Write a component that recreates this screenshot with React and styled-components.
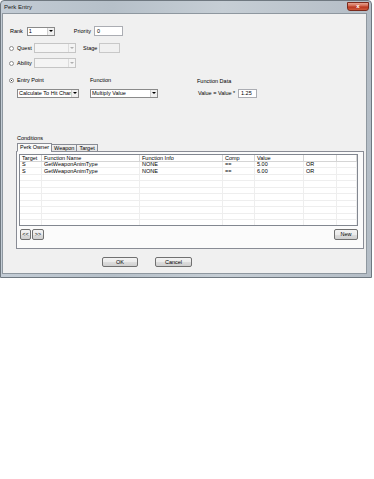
import React from 'react'
import styled, { createGlobalStyle } from 'styled-components'

const Global = createGlobalStyle`
  html, body { margin: 0; padding: 0; background: #fff; }
  * { box-sizing: border-box; }
`

const Window = styled.div`
  width: 372px;
  height: 278px;
  overflow: hidden;
  display: flex;
  flex-direction: column;
  padding: 0 4px 3px 1px;
  background: linear-gradient(90deg, #c3ccd5 0%, #b6c0c9 30%, #c6ced5 60%, #b4bdc6 100%);
  border: 1px solid #6f7880;
  border-radius: 4px 4px 0 0;
  font-family: "Liberation Sans", Arial, sans-serif;
  font-size: 5.5px;
  line-height: 1.1;
  color: #000;
`

const TitleBar = styled.div`
  height: 12px;
  flex: none;
  display: flex;
  align-items: center;
  justify-content: space-between;
  padding-left: 2px;
  font-size: 6px;
  color: #1a1a1a;
`

const CloseBtn = styled.div`
  width: 22px;
  height: 9px;
  margin-top: -2px;
  margin-right: -2px;
  border-radius: 0 0 3px 3px;
  border: 1px solid #7a2a1c;
  background: linear-gradient(#e6a391 0%, #d0644b 45%, #b8361e 55%, #cf5a3c 100%);
  color: #fff;
  font-size: 6px;
  font-weight: bold;
  display: flex;
  align-items: center;
  justify-content: center;
`

const Client = styled.div`
  flex: 1;
  min-height: 0;
  overflow: hidden;
  background: #f0f0f0;
  border: 1px solid #8e979f;
  padding: 11px 0 0 0;
  display: flex;
  flex-direction: column;
`

const Row = styled.div`
  display: flex;
  flex: none;
  align-items: center;
  height: ${p => p.h || 10}px;
  margin-top: ${p => p.mt || 0}px;
`

const Label = styled.span`
  display: inline-block;
  width: ${p => (p.w ? p.w + 'px' : 'auto')};
  margin-left: ${p => p.ml || 0}px;
  white-space: nowrap;
  color: #000;
`

const Radio = styled.span`
  width: 5px;
  height: 5px;
  border-radius: 50%;
  border: 1px solid #8d8d8d;
  background: ${p => (p.on ? 'radial-gradient(circle, #2a2a2a 35%, #fff 45%)' : '#fff')};
  margin-left: ${p => p.ml || 0}px;
  margin-right: 3px;
  flex: none;
`

const Combo = styled.div`
  width: ${p => p.w}px;
  height: ${p => p.h || 9}px;
  margin-left: ${p => p.ml || 0}px;
  border: 1px solid ${p => (p.disabled ? '#c5c5c5' : '#8a8a8a')};
  background: ${p => (p.disabled ? '#f4f4f4' : '#fff')};
  display: flex;
  align-items: center;
  padding-left: 1px;
  overflow: hidden;
  white-space: nowrap;
  flex: none;
`

const ComboText = styled.span`
  flex: 1;
  overflow: hidden;
`

const Arrow = styled.span`
  width: 7px;
  height: 100%;
  border-left: 1px solid ${p => (p.disabled ? '#dcdcdc' : '#d0d0d0')};
  background: ${p => (p.disabled ? '#f4f4f4' : '#f0f0f0')};
  display: flex;
  align-items: center;
  justify-content: center;
  flex: none;
  &::after {
    content: '';
    border-left: 2px solid transparent;
    border-right: 2px solid transparent;
    border-top: 2px solid ${p => (p.disabled ? '#b0b0b0' : '#000')};
  }
`

const Input = styled.div`
  width: ${p => p.w}px;
  height: ${p => p.h || 10}px;
  margin-left: ${p => p.ml || 0}px;
  border: 1px solid ${p => (p.disabled ? '#c8c8c8' : '#abadb3')};
  background: ${p => (p.disabled ? '#f0f0f0' : '#fff')};
  padding-left: 2px;
  display: flex;
  align-items: center;
  flex: none;
`

const Tabs = styled.div`
  display: flex;
  flex: none;
  margin: 1px 0 0 14px;
  height: 9px;
  align-items: flex-end;
  position: relative;
  z-index: 1;
`

const Tab = styled.div`
  height: ${p => (p.active ? 9 : 8)}px;
  padding: 0 2px;
  border: 1px solid #898c95;
  border-bottom: ${p => (p.active ? '1px solid #fbfbfb' : '1px solid #898c95')};
  margin-left: ${p => (p.first ? 0 : -1)}px;
  background: ${p => (p.active ? '#fbfbfb' : 'linear-gradient(#f2f2f2, #e3e3e3)')};
  display: flex;
  align-items: center;
  white-space: nowrap;
`

const Pane = styled.div`
  flex: none;
  margin: -1px 0 0 13px;
  width: 348px;
  height: 98px;
  border: 1px solid #898c95;
  background: #fbfbfb;
  padding: 2px 3px 0 2px;
  display: flex;
  flex-direction: column;
`

const List = styled.div`
  flex: none;
  height: 72px;
  border: 1px solid #828790;
  background: #fff;
  overflow: hidden;
  width: 339px;
`

const Grid = styled.div`
  display: grid;
  grid-template-columns: 22px 98px 83px 32px 49px 33px 20px;
  grid-auto-rows: 6.5px;
`

const Head = styled.div`
  height: 7px;
  padding-left: 2px;
  border-right: 1px solid #d5d5d5;
  border-bottom: 1px solid #d5d5d5;
  display: flex;
  align-items: center;
  white-space: nowrap;
  overflow: hidden;
`

const Cell = styled.div`
  height: 6.5px;
  padding-left: 2px;
  border-right: 1px solid #eeeeee;
  border-bottom: 1px solid #eeeeee;
  display: flex;
  align-items: center;
  white-space: nowrap;
  overflow: hidden;
`

const SmallBtn = styled.div`
  width: ${p => p.w}px;
  height: ${p => p.h || 11}px;
  margin-left: ${p => p.ml || 0}px;
  margin-right: ${p => p.mr || 0}px;
  border: 1px solid #707070;
  border-radius: 2px;
  background: linear-gradient(#f2f2f2 0%, #ebebeb 50%, #dddddd 51%, #cfcfcf 100%);
  display: flex;
  align-items: center;
  justify-content: center;
  flex: none;
`

const Spacer = styled.div`
  flex: 1;
`

const columns = ['Target', 'Function Name', 'Function Info', 'Comp', 'Value', '', '']
const rows = [
  ['S', 'GetWeaponAnimType', 'NONE', '==', '5.00', 'OR', ''],
  ['S', 'GetWeaponAnimType', 'NONE', '==', '6.00', 'OR', ''],
]
const blanks = Array.from({ length: 8 }, () => ['', '', '', '', '', '', ''])

export default function App() {
  return (
    <>
      <Global />
      <Window>
        <TitleBar>
          <span>Perk Entry</span>
          <CloseBtn>x</CloseBtn>
        </TitleBar>
        <Client>
          <Row mt={1}>
            <Label ml={7}>Rank</Label>
            <Combo w={28} ml={4}>
              <ComboText>1</ComboText>
              <Arrow />
            </Combo>
            <Label ml={19}>Priority</Label>
            <Input w={29} ml={3}>0</Input>
          </Row>
          <Row mt={7}>
            <Radio ml={6} />
            <Label w={17}>Quest</Label>
            <Combo w={42} h={10} disabled>
              <ComboText />
              <Arrow disabled />
            </Combo>
            <Label ml={7} w={16}>Stage</Label>
            <Input w={21} disabled />
          </Row>
          <Row mt={5}>
            <Radio ml={6} />
            <Label w={17}>Ability</Label>
            <Combo w={42} h={10} disabled>
              <ComboText />
              <Arrow disabled />
            </Combo>
          </Row>
          <Row mt={9} h={7}>
            <Radio ml={6} on />
            <Label w={73}>Entry Point</Label>
            <Label w={107}>Function</Label>
            <Label style={{ marginTop: 2 }}>Function Data</Label>
          </Row>
          <Row mt={4}>
            <Combo w={62} ml={14}>
              <ComboText>Calculate To Hit Chan</ComboText>
              <Arrow />
            </Combo>
            <Combo w={68} ml={11}>
              <ComboText>Multiply Value</ComboText>
              <Arrow />
            </Combo>
            <Label ml={40} w={40}>Value = Value *</Label>
            <Input w={19} h={9}>1.25</Input>
          </Row>
          <Row mt={37} h={7}>
            <Label ml={14}>Conditions</Label>
          </Row>
          <Tabs>
            <Tab active first>Perk Owner</Tab>
            <Tab>Weapon</Tab>
            <Tab>Target</Tab>
          </Tabs>
          <Pane>
            <List>
              <Grid>
                {columns.map((c, i) => (
                  <Head key={i}>{c}</Head>
                ))}
                {[...rows, ...blanks].map((r, ri) =>
                  r.map((v, ci) => <Cell key={ri + '-' + ci}>{v}</Cell>)
                )}
              </Grid>
            </List>
            <Row mt={3} h={11}>
              <SmallBtn w={11} ml={1}>&lt;&lt;</SmallBtn>
              <SmallBtn w={12} ml={1}>&gt;&gt;</SmallBtn>
              <Spacer />
              <SmallBtn w={24} mr={2}>New</SmallBtn>
            </Row>
          </Pane>
          <Row mt={8} h={10}>
            <SmallBtn w={36} h={10} ml={99}>OK</SmallBtn>
            <SmallBtn w={37} h={10} ml={17}>Cancel</SmallBtn>
          </Row>
        </Client>
      </Window>
    </>
  )
}
